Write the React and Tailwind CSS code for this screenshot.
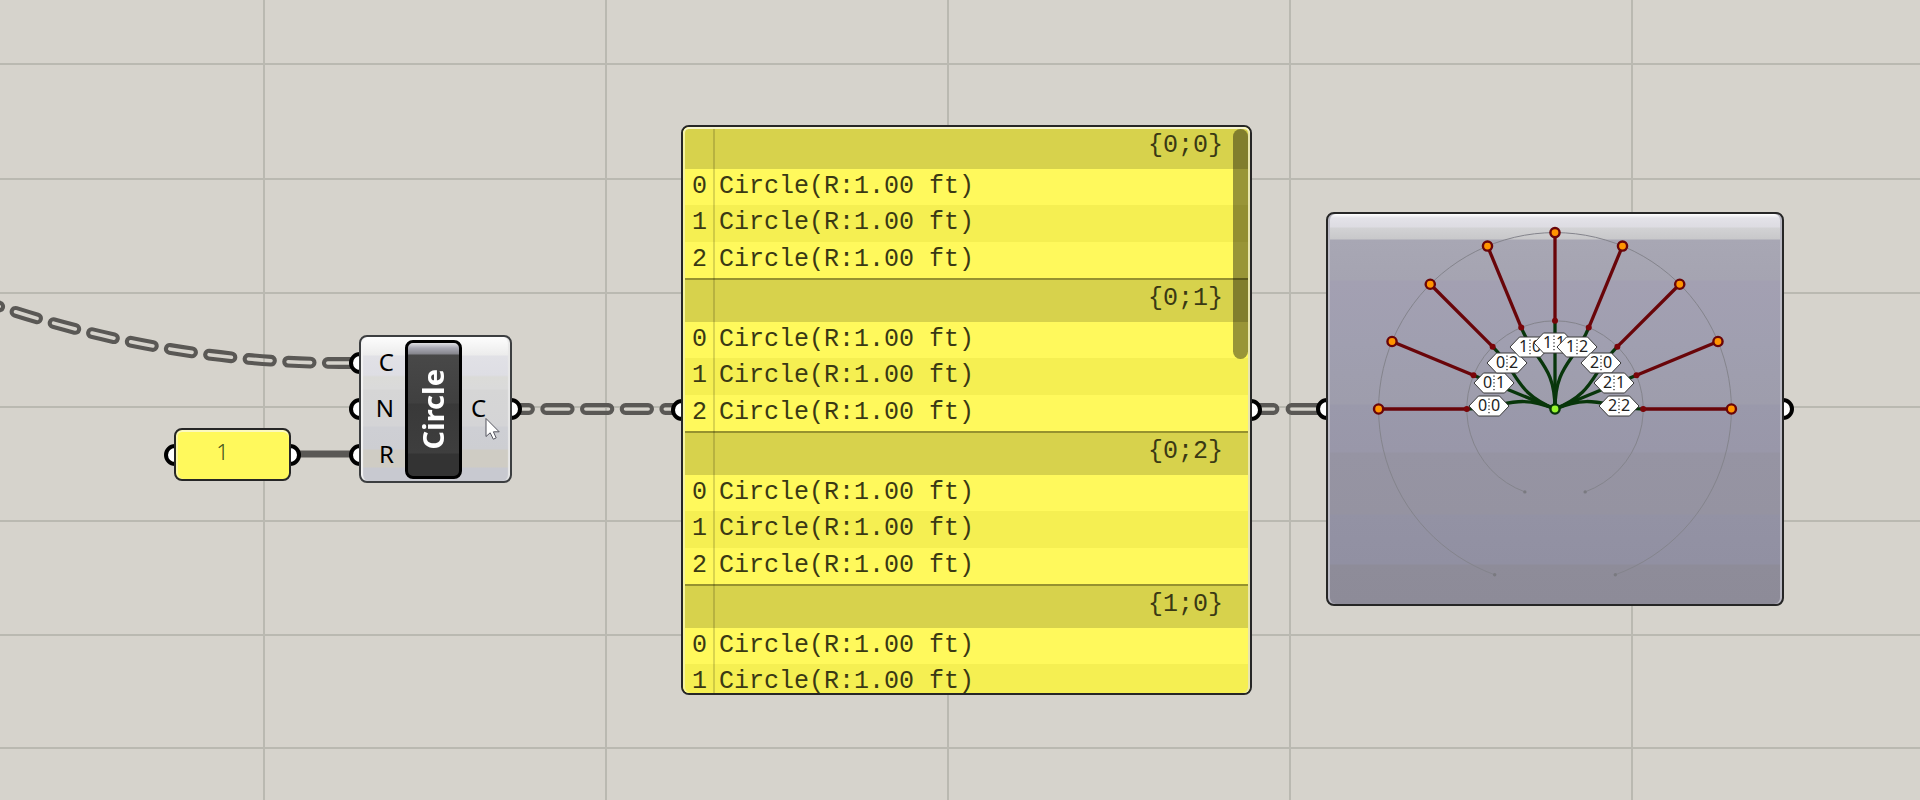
const VERTICALS = [263, 605, 947, 1289, 1631];
const HORIZONTALS = [63, 178, 292, 406, 520, 634, 747];

const BRANCHES = [
  { path: "{0;0}", items: 3 },
  { path: "{0;1}", items: 3 },
  { path: "{0;2}", items: 3 },
  { path: "{1;0}", items: 2 },
];

function Grips({ count = 1, side }) {
  return (
    <div
      className={
        "absolute inset-y-0 flex flex-col justify-center gap-6 " + (side === "left" ? "-left-[10px]" : "-right-[10px]")
      }
    >
      {Array.from({ length: count }, (_, i) => (
        <span key={i} className="size-[22px] rounded-full border-4 border-black bg-white" />
      ))}
    </div>
  );
}

function GridLines() {
  return (
    <g fill="#bab9b1">
      {VERTICALS.map((x) => (
        <rect key={x} x={x} y="0" width="2" height="100%" />
      ))}
      {HORIZONTALS.map((y) => (
        <rect key={y} x="0" y={y} width="100%" height="2" />
      ))}
    </g>
  );
}

const TREE_WIRES = [
  "M350.3 363 L340 363 Q163 363 -14 302.1",
  "M506.5 409 H675",
  "M1255 409 H1273.5 M1291.5 409 H1325",
];

function Wires() {
  return (
    <>
      <mask id="hollow" maskUnits="userSpaceOnUse" x="-20" y="0" width="1940" height="800">
        <rect x="-20" y="0" width="1940" height="800" fill="white" />
        {TREE_WIRES.map((d, i) => (
          <path
            key={d}
            d={d}
            fill="none"
            stroke="black"
            strokeWidth="3.6"
            strokeLinecap="round"
            strokeDasharray={i < 2 ? "22.5 17.2" : "none"}
          />
        ))}
      </mask>
      <g mask="url(#hollow)">
        {TREE_WIRES.map((d, i) => (
          <path
            key={d}
            d={d}
            fill="none"
            stroke="#5a5855"
            strokeWidth="11.8"
            strokeLinecap="round"
            strokeDasharray={i < 2 ? "22.5 17.2" : "none"}
          />
        ))}
      </g>
      <path d="M290 454 H360" stroke="#5a5855" strokeWidth="7" />
    </>
  );
}

function NumberPanel() {
  return (
    <section aria-label="Radius" className="absolute left-[174px] top-[428px]">
      <Grips side="left" />
      <Grips side="right" />
      <div className="relative flex h-[53px] w-[117px] justify-center rounded-lg border-2 border-[#262626] bg-[#fff95c] pr-5 pt-[7px] font-['Noto_Sans',sans-serif] text-[22px] font-light leading-[28px] text-[#44501c] shadow-[inset_0_2px_0_#fbf9c0,inset_2px_0_0_#fbf8a0]">
        1
      </div>
    </section>
  );
}

function CircleComponent() {
  return (
    <section aria-label="Circle component" className="absolute left-[359px] top-[335px] font-['Noto_Sans',sans-serif]">
      <Grips side="left" count={3} />
      <Grips side="right" />
      <div className="relative flex h-[148px] w-[153px] items-center rounded-lg border-2 border-[#3c3e40] bg-[linear-gradient(#fdfdfd_0,#ececec_18px,#e1e1e6_19px,#dedee4_38px,#dbdbd8_40px,#dadada_52px,#d6d6d6_53px,#d4d4d6_89px,#cecfd4_90px,#cdced2_112px,#cfccc4_113px,#cfccc4_130px,#c8c9d0_131px,#c8c9d0_100%)] text-[24px] leading-[46px] text-black shadow-[inset_3px_0_1px_-1px_#f4f4f4,inset_-3px_0_1px_-1px_#e8e8e8]">
        <ul className="flex w-[44px] flex-col pb-[2px] pr-[11px] text-right">
          <li>C</li>
          <li>N</li>
          <li>R</li>
        </ul>
        <div className="flex h-[139px] w-[57px] items-center justify-center rounded-lg border-[3px] border-black bg-[linear-gradient(#e0e0e4_0,#a9a9b4_5px,#85858c_11px,#484848_12px,#404040_60px,#393939_61px,#3e3e3e_110px,#333333_111px)] pr-[2px]">
          <h2 className="rotate-180 text-[29px] font-bold leading-[40px] text-white [writing-mode:vertical-rl]">Circle</h2>
        </div>
        <p className="pb-[2px] pl-[9px]">C</p>
      </div>
    </section>
  );
}

function DataPanel() {
  return (
    <section aria-label="Panel" className="absolute left-[681px] top-[125px]">
      <Grips side="left" />
      <Grips side="right" />
      <div className="relative h-[570px] w-[571px] overflow-hidden rounded-lg border-2 border-[#262626] bg-[#fff95c] font-['Liberation_Mono',monospace] text-[25px] leading-[36px] text-[#3a3914]">
        <div className="mx-[2px] mt-[2px]">
          {BRANCHES.map((branch, b) => (
            <div key={branch.path}>
              <h3
                className={
                  "border-[#96922f] bg-[#d7d24c] pr-[25px] text-right leading-[34px] " +
                  (b === 0 ? "h-[40px]" : "h-[44px] border-t-2 pt-[2px]")
                }
              >
                {branch.path}
              </h3>
              {Array.from({ length: branch.items }, (_, i) => (
                <div key={i} className={"flex " + (i === 1 ? "h-[37px] bg-[#f5ef52]" : "h-[36px]")}>
                  <span className="w-[34px] pl-[7px]">{i}</span>
                  <span>Circle(R:1.00 ft)</span>
                </div>
              ))}
            </div>
          ))}
        </div>
        <span className="absolute bottom-0 left-[30px] top-[2px] w-[2px] bg-black/15" />
        <span className="absolute right-[2px] top-[2px] h-[230px] w-[15px] rounded-lg bg-black/40" />
        <span className="absolute inset-0 rounded-md shadow-[inset_0_2px_0_#f6f4cf,inset_2px_0_0_#f6f3a0,inset_-2px_0_0_#e9e6b0]" />
      </div>
    </section>
  );
}

const CX = 227;
const CY = 195;
const polar = (r, deg) => {
  const a = (deg * Math.PI) / 180;
  return [CX + r * Math.cos(a), CY - r * Math.sin(a)];
};
const LEAVES = [180, 157.5, 135, 112.5, 90, 67.5, 45, 22.5, 0].map((angle, i) => ({
  angle,
  parent: [157.5, 90, 22.5][Math.floor(i / 3)],
}));
const LABELS = [
  ["0", "0", 161, 192],
  ["0", "1", 166, 169],
  ["0", "2", 179, 149],
  ["1", "0", 202, 133],
  ["1", "1", 226, 129],
  ["1", "2", 249, 133],
  ["2", "0", 273, 149],
  ["2", "1", 286, 169],
  ["2", "2", 291, 192],
];

function openArc(r) {
  const [x1, y1] = polar(r, 250);
  const [x2, y2] = polar(r, 290);
  return `M${x1} ${y1} A${r} ${r} 0 1 1 ${x2} ${y2}`;
}

function TreeGraph() {
  return (
    <svg className="block h-[390px] w-[454px]" viewBox="0 0 454 390" role="img" aria-label="Tree graph">
      {[88.2, 176.4].map((r) => (
        <g key={r}>
          <path d={openArc(r)} fill="none" stroke="#84848c" strokeWidth="1" />
          {[250, 290].map((a) => (
            <circle key={a} cx={polar(r, a)[0]} cy={polar(r, a)[1]} r="1.7" fill="#7a7a80" />
          ))}
        </g>
      ))}
      {LEAVES.map(({ angle, parent }) => (
        <path
          key={angle}
          d={`M${polar(88.2, angle)} C${polar(50, angle)} ${polar(44, parent)} ${CX},${CY}`}
          fill="none"
          stroke="#08360b"
          strokeWidth="3.3"
        />
      ))}
      {LEAVES.map(({ angle }) => (
        <g key={angle}>
          <path d={`M${polar(88.2, angle)} L${polar(176.4, angle)}`} stroke="#690509" strokeWidth="3.3" />
          <circle cx={polar(88.2, angle)[0]} cy={polar(88.2, angle)[1]} r="3" fill="#7a0509" />
          <circle cx={polar(176.4, angle)[0]} cy={polar(176.4, angle)[1]} r="4.6" fill="#ff9500" stroke="#690509" strokeWidth="2.4" />
        </g>
      ))}
      <circle cx={CX} cy={CY} r="4.6" fill="#96f52d" stroke="#08360b" strokeWidth="2.4" />
      {LABELS.map(([a, b, x, y]) => (
        <g key={a + b} transform={`translate(${x} ${y})`} className="font-['Noto_Sans',sans-serif] text-[16px]">
          <path d="M-20 0 L-10.500 -10 H10.500 L20 0 L10.500 10 H-10.500 Z" fill="white" stroke="#3a3a3a" strokeWidth="1" />
          <text x="-11" y="5" fill="#222">{a}</text>
          <path d="M0 -7.500 V8.500" stroke="#222" strokeWidth="1.200" strokeDasharray="1.200 2.200" />
          <text x="2" y="5" fill="#222">{b}</text>
        </g>
      ))}
    </svg>
  );
}

function ParamViewer() {
  return (
    <section aria-label="Param Viewer" className="absolute left-[1326px] top-[212px]">
      <Grips side="left" />
      <Grips side="right" />
      <div className="relative rounded-lg border-2 border-[#262626] bg-[linear-gradient(#ffffff_0,#e3e2e8_4px,#dddce2_13px,#d2d2d4_14px,#c8c8ca_25px,#a8a7b4_26px,#a5a4b1_66px,#a3a0b2_67px,#a09fb0_130px,#9e9dac_190px,#9a99ab_191px,#9997a9_238px,#9694a3_239px,#9593a1_300px,#9392a4_301px,#9190a2_350px,#8e8c99_351px,#8d8b98_100%)] shadow-[inset_2px_0_0_#bab9c4,inset_-2px_0_0_#bab9c4]">
        <TreeGraph />
      </div>
    </section>
  );
}

function Cursor() {
  return (
    <svg className="absolute left-[485px] top-[417px] h-[24px] w-[17px]" viewBox="0 0 17 24" aria-hidden="true">
      <path d="M1 1.500 V19.500 L5.200 15.800 L8.300 22.200 L11.200 20.900 L8.400 14.800 H14.200 Z" fill="white" stroke="#55555f" strokeWidth="1" strokeLinejoin="round" />
    </svg>
  );
}

export default function App() {
  return (
    <main className="relative h-screen min-h-[800px] w-full overflow-hidden bg-[#d6d3cc]">
      <svg className="absolute inset-0 size-full" aria-hidden="true">
        <GridLines />
        <Wires />
      </svg>
      <NumberPanel />
      <CircleComponent />
      <DataPanel />
      <ParamViewer />
      <Cursor />
    </main>
  );
}
